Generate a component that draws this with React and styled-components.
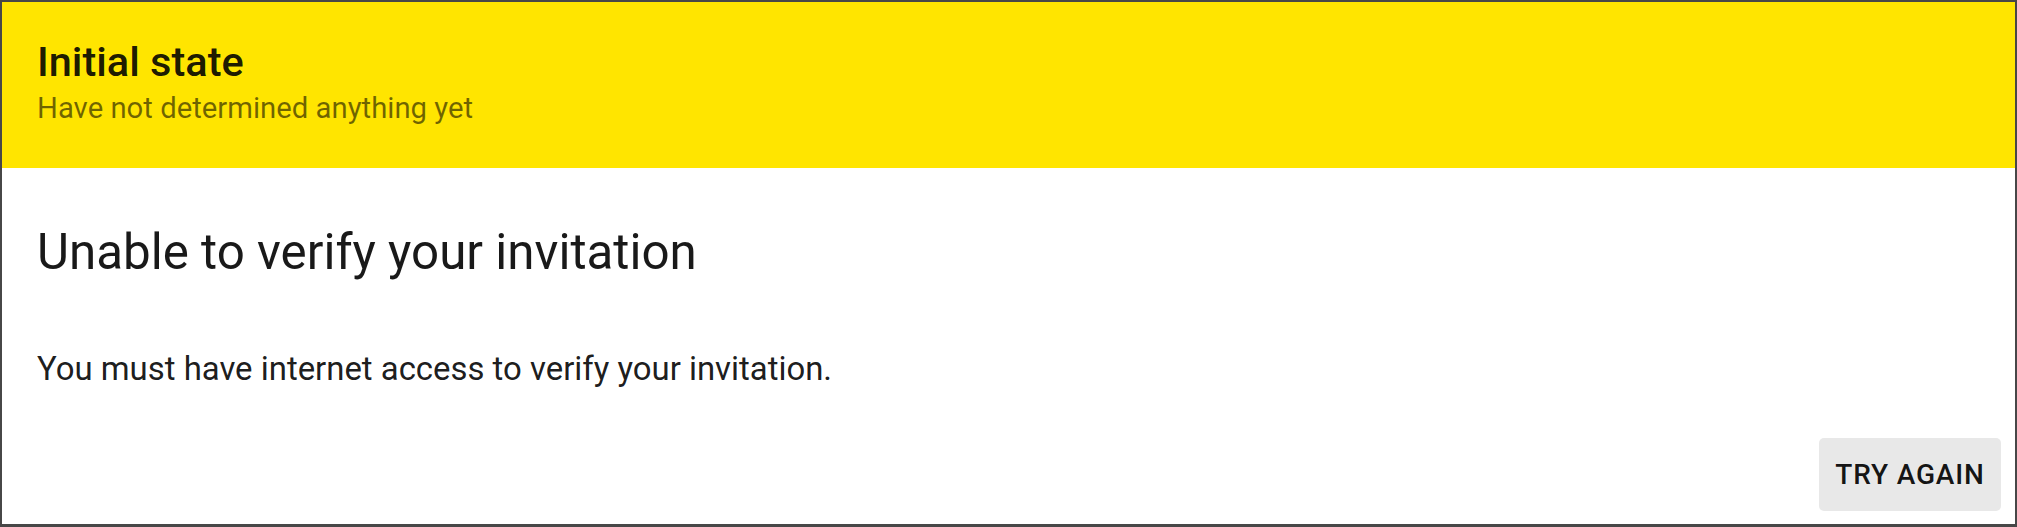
import React from 'react'
import styled, { createGlobalStyle } from 'styled-components'


const GlobalStyle = createGlobalStyle`
  html, body { margin: 0; padding: 0; background: #ffffff; }
  body { font-family: Roboto, "Noto Sans", Arial, sans-serif; }
`

const Frame = styled.div`
  box-sizing: border-box;
  width: 2017px;
  height: 527px;
  border: 2px solid #474747;
  border-bottom-width: 3px;
  display: flex;
  flex-direction: column;
  background: #ffffff;
`

const Header = styled.div`
  background: #ffe500;
  padding: 36px 35px 44px;
  display: flex;
  flex-direction: column;
  gap: 6px;
`

const Title = styled.div`
  font-size: 41.5px;
  line-height: 48px;
  font-weight: 500;
  color: rgba(0, 0, 0, 0.9);
`

const Subtitle = styled.div`
  font-size: 29.3px;
  line-height: 32px;
  color: rgba(0, 0, 0, 0.56);
`

const Body = styled.div`
  display: flex;
  flex-direction: column;
  padding: 56px 35px 0;
`

const Heading = styled.h2`
  margin: 0;
  font-size: 49.3px;
  line-height: 56px;
  font-weight: 400;
  color: rgba(0, 0, 0, 0.9);
`

const Message = styled.p`
  margin: 69px 0 0;
  font-size: 32.9px;
  line-height: 40px;
  color: rgba(0, 0, 0, 0.9);
`

const Actions = styled.div`
  margin-top: auto;
  display: flex;
  justify-content: flex-end;
  padding: 0 14px 13px;
`

const Button = styled.button`
  height: 73px;
  min-width: 182px;
  padding: 0 16px;
  border: none;
  border-radius: 5px;
  background: #e8e8e8;
  font-family: Roboto, "Noto Sans", Arial, sans-serif;
  font-size: 28px;
  font-weight: 500;
  letter-spacing: 0.03em;
  color: rgba(0, 0, 0, 0.92);
  text-transform: uppercase;
  cursor: pointer;
`


const App = () => {
  return (
    <>
      <GlobalStyle />
      <Frame>
        <Header>
          <Title>Initial state</Title>
          <Subtitle>Have not determined anything yet</Subtitle>
        </Header>
        <Body>
          <Heading>Unable to verify your invitation</Heading>
          <Message>You must have internet access to verify your invitation.</Message>
        </Body>
        <Actions>
          <Button>Try again</Button>
        </Actions>
      </Frame>
    </>
  )
}

export default App
